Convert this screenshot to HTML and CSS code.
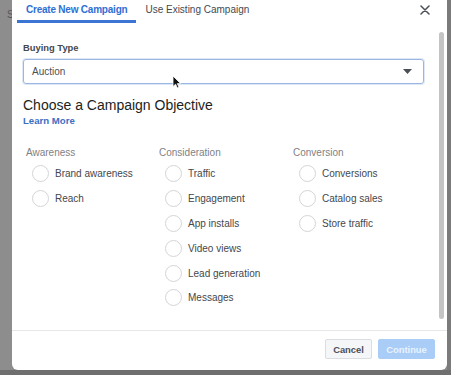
FILE: index.html
```html
<!DOCTYPE html>
<html>
<head>
<meta charset="utf-8">
<link rel="stylesheet" href="styles.css">
</head>
<body>
<div class="page">
  <div class="backdrop-left"><span class="bg-s">S</span></div>
  <div class="modal">
    <div class="header">
      <div class="tab active">Create New Campaign</div>
      <div class="tab">Use Existing Campaign</div>
      <svg class="close" width="10" height="10" viewBox="0 0 10 10"><path d="M1 1L9 9M9 1L1 9" stroke="#4b4f56" stroke-width="1.5" stroke-linecap="round"/></svg>
    </div>
    <div class="body">
      <div class="content">
        <div class="label">Buying Type</div>
        <div class="select">
          <span>Auction</span>
          <svg width="9" height="5" viewBox="0 0 9 5"><path d="M0 0H9L4.5 5Z" fill="#4b4f56"/></svg>
        </div>
        <div class="title">Choose a Campaign Objective</div>
        <div class="learn">Learn More</div>
        <div class="columns">
          <div class="col">
            <div class="col-head">Awareness</div>
            <div class="opt"><span class="radio"></span>Brand awareness</div>
            <div class="opt"><span class="radio"></span>Reach</div>
          </div>
          <div class="col">
            <div class="col-head">Consideration</div>
            <div class="opt"><span class="radio"></span>Traffic</div>
            <div class="opt"><span class="radio"></span>Engagement</div>
            <div class="opt"><span class="radio"></span>App installs</div>
            <div class="opt"><span class="radio"></span>Video views</div>
            <div class="opt"><span class="radio"></span>Lead generation</div>
            <div class="opt"><span class="radio"></span>Messages</div>
          </div>
          <div class="col">
            <div class="col-head">Conversion</div>
            <div class="opt"><span class="radio"></span>Conversions</div>
            <div class="opt"><span class="radio"></span>Catalog sales</div>
            <div class="opt"><span class="radio"></span>Store traffic</div>
          </div>
        </div>
      </div>
      <div class="rail"><div class="thumb"></div></div>
    </div>
    <div class="footer">
      <button class="btn cancel">Cancel</button>
      <button class="btn continue">Continue</button>
    </div>
  </div>
  <div class="backdrop-right"></div>
  <svg class="cursor" width="9" height="14" viewBox="0 0 9 14"><path d="M1 1V11.5L3.6 9.2L5.4 13L7 12.3L5.3 8.6H8.6Z" fill="#111" stroke="#fff" stroke-width="0.8"/></svg>
</div>
</body>
</html>
```

FILE: styles.css
```css
* { box-sizing: border-box; }
html, body { margin: 0; padding: 0; }
body {
  width: 451px;
  height: 375px;
  overflow: hidden;
  background: #6f6f6f;
  font-family: "Liberation Sans", Arial, sans-serif;
}
.page {
  position: relative;
  display: flex;
  height: 370px;
  background: #8b8b8b;
}
.backdrop-left {
  width: 12px;
  background: #8d8d8d;
  color: #555;
  font-size: 10px;
  padding-top: 9px;
}
.bg-s { display: block; margin-left: 7px; }
.backdrop-right {
  flex: 1;
  background: #7b7b7b;
}
.modal {
  width: 435px;
  height: 370px;
  background: #fff;
  border-radius: 0 0 6px 6px;
  display: flex;
  flex-direction: column;
}
.header {
  height: 24px;
  display: flex;
  align-items: flex-start;
  padding-left: 5px;
  position: relative;
}
.tab {
  height: 23px;
  line-height: 20px;
  padding: 0 9px;
  font-size: 10px;
  color: #444950;
  border-bottom: 3px solid transparent;
}
.tab.active {
  color: #2f6fd4;
  font-weight: bold;
  letter-spacing: -0.22px;
  border-bottom-color: #3b74d3;
}
.close {
  position: absolute;
  right: 17px;
  top: 5px;
}
.body {
  flex: 1;
  display: flex;
  border-bottom: 1px solid #e6e7e9;
}
.content {
  flex: 1;
  padding: 17px 0 0 11px;
}
.label {
  font-size: 9.4px;
  font-weight: bold;
  line-height: 14px;
  color: #444950;
}
.select {
  margin-top: 4px;
  height: 25px;
  border: 1px solid #9bb6e2;
  border-radius: 3px;
  box-shadow: 0 0 0 1px #dde8f7;
  display: flex;
  align-items: center;
  justify-content: space-between;
  padding: 0 11px 0 8px;
  font-size: 10px;
  color: #4b4f56;
}
.title {
  margin-top: 12px;
  font-size: 14px;
  line-height: 18px;
  color: #1c1e21;
}
.learn {
  font-size: 9.6px;
  font-weight: bold;
  line-height: 14px;
  color: #3c6ec3;
}
.columns {
  margin-top: 18px;
  padding-left: 3px;
  display: grid;
  grid-template-columns: 133px 134px 120px;
}
.col-head {
  font-size: 10px;
  line-height: 14px;
  color: #7e8186;
  margin-bottom: 1.5px;
}
.opt {
  height: 24.8px;
  display: flex;
  align-items: center;
  padding-left: 6px;
  font-size: 10px;
  color: #44474d;
}
.radio {
  width: 17px;
  height: 17px;
  border: 1px solid #d3d5d8;
  border-radius: 50%;
  margin-right: 6px;
  flex: none;
}
.rail {
  width: 23px;
  padding: 8px 3px 11px 15px;
}
.thumb {
  height: 100%;
  background: #c4c4c4;
  border-radius: 3px;
}
.footer {
  height: 39px;
  display: flex;
  justify-content: flex-end;
  align-items: flex-start;
  gap: 6px;
  padding: 8px 12px 0 0;
}
.btn {
  height: 20px;
  border-radius: 2px;
  font-family: "Liberation Sans", Arial, sans-serif;
  font-size: 9.4px;
  font-weight: bold;
  padding: 0;
  margin: 0;
}
.cancel {
  width: 47px;
  background: #f5f6f7;
  border: 1px solid #dadde1;
  color: #4b4f56;
}
.continue {
  width: 57px;
  background: #a9cdf7;
  border: 1px solid #a9cdf7;
  color: #eaf3fe;
}
.cursor {
  position: absolute;
  left: 172px;
  top: 75px;
}
```
